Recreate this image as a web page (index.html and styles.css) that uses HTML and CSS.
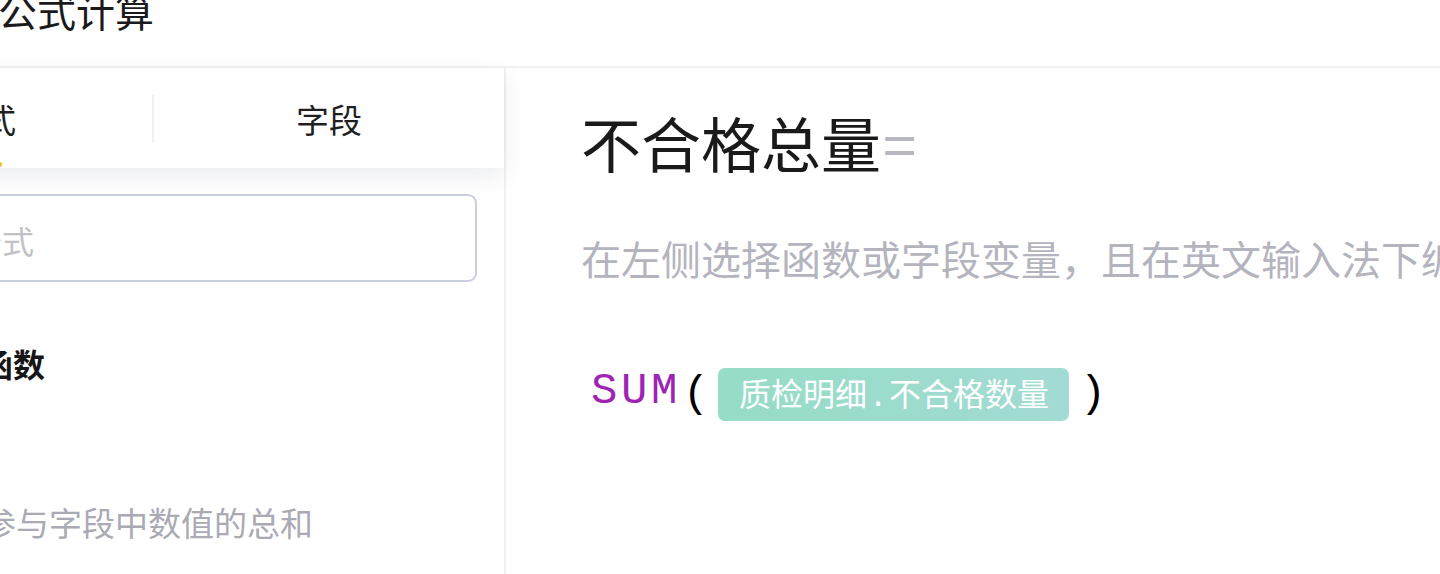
FILE: index.html
```html
<!DOCTYPE html>
<html lang="zh-CN">
<head>
<meta charset="utf-8">
<title>公式计算</title>
<link rel="stylesheet" href="styles.css">
</head>
<body>
<div class="app">
  <header class="header">
    <h1 class="header-title">公式计算</h1>
  </header>
  <div class="main">
    <aside class="left">
      <div class="tabs">
        <div class="tab tab-active">公式<span class="tab-bar"></span></div>
        <div class="tab-divider"></div>
        <div class="tab tab-fill">字段</div>
      </div>
      <div class="left-body">
        <div class="search">
          <svg class="search-icon" width="24" height="24" viewBox="0 0 24 24" fill="none" stroke="#c0c0c8" stroke-width="2"><circle cx="11" cy="11" r="7"/><path d="M16 16l5 5"/></svg>
          <span class="search-ph">公式</span>
        </div>
        <div class="group-title">数学函数</div>
        <div class="fn-item">
          <div class="fn-name">SUM</div>
          <div class="fn-desc">返回参与字段中数值的总和</div>
        </div>
      </div>
    </aside>
    <section class="right">
      <div class="formula-name">不合格总量<span class="eq">=</span></div>
      <div class="hint">在左侧选择函数或字段变量，且在英文输入法下编辑公式</div>
      <div class="formula">
        <span class="fn">SUM</span><span class="paren">(</span><span class="tag"><span class="tag-text">质检明细<span class="dot">.</span>不合格数量</span></span><span class="paren paren-close">)</span>
      </div>
    </section>
  </div>
</div>
</body>
</html>
```
FILE: styles.css
```css
html, body {
  margin: 0;
  padding: 0;
  background: #ffffff;
}
body {
  width: 1440px;
  height: 574px;
  overflow: hidden;
  font-family: "Noto Sans CJK SC", "Noto Sans", sans-serif;
  color: #1c1c1c;
}
.app {
  display: flex;
  flex-direction: column;
  height: 574px;
}
.header {
  height: 66px;
  border-bottom: 2px solid #f2f2f4;
  display: flex;
  align-items: flex-start;
  flex: 0 0 auto;
}
.header-title {
  margin: -9px 0 0 -2px;
  font-size: 39px;
  line-height: 39px;
  font-weight: 400;
  color: #1a1a1a;
}
.main {
  display: flex;
  flex: 1 1 auto;
  min-height: 0;
}
.left {
  flex: 0 0 690px;
  margin-left: -186px;
  border-right: 2px solid #f2f2f4;
  display: flex;
  flex-direction: column;
}
.tabs {
  height: 100px;
  display: flex;
  align-items: center;
  background: #fff;
  box-shadow: 0 8px 22px rgba(40, 50, 90, 0.09);
  position: relative;
  z-index: 1;
}
.tab {
  height: 100px;
  display: flex;
  align-items: center;
  justify-content: center;
  font-size: 33px;
  line-height: 33px;
  color: #1f1f1f;
  padding-top: 2px;
  box-sizing: border-box;
}
.tab-active {
  flex: 0 0 338px;
  position: relative;
}
.tab-bar {
  position: absolute;
  left: 150px;
  bottom: 1px;
  width: 38px;
  height: 5px;
  border-radius: 3px;
  background: #f5b91f;
}
.tab-divider {
  flex: 0 0 2px;
  height: 49px;
  background: #f1f1f3;
}
.tab-fill {
  flex: 1 1 auto;
}
.left-body {
  padding: 26px 27px 0 103px;
  display: flex;
  flex-direction: column;
}
.search {
  height: 88px;
  box-sizing: border-box;
  border: 2px solid #cacedc;
  border-radius: 9px;
  display: flex;
  align-items: center;
  gap: 14px;
  padding-left: 13px;
}
.search-ph {
  font-size: 32px;
  line-height: 32px;
  color: #c2c2c6;
  padding-top: 3px;
}
.group-title {
  margin-top: 65px;
  font-size: 32px;
  line-height: 32px;
  font-weight: 700;
  color: #161616;
}
.fn-item {
  display: flex;
  flex-direction: column;
}
.fn-name {
  margin-top: 36px;
  font-size: 32px;
  line-height: 32px;
  color: #1f1f1f;
}
.fn-desc {
  margin-top: 59px;
  font-size: 33px;
  line-height: 33px;
  color: #aaaab4;
  white-space: nowrap;
}
.right {
  flex: 1 1 auto;
  padding: 44px 0 0 75px;
  display: flex;
  flex-direction: column;
  overflow: hidden;
}
.formula-name {
  font-size: 60px;
  line-height: 60px;
  color: #1a1a1a;
  white-space: nowrap;
}
.eq {
  color: #b7b7c0;
  margin-left: 2px;
}
.hint {
  margin-top: 66px;
  font-size: 40px;
  line-height: 40px;
  color: #b4b4be;
  white-space: nowrap;
}
.formula {
  margin-top: 90px;
  padding-left: 10px;
  display: flex;
  align-items: center;
  height: 53px;
  white-space: nowrap;
}
.fn {
  font-family: "Liberation Mono", monospace;
  font-size: 44px;
  letter-spacing: 3.6px;
  color: #9d24b4;
  line-height: 53px;
  padding-bottom: 6px;
}
.paren {
  font-family: "Liberation Mono", monospace;
  font-size: 44px;
  color: #000;
  line-height: 53px;
  width: 30px;
  text-align: center;
}
.tag {
  height: 53px;
  box-sizing: border-box;
  display: flex;
  align-items: center;
  padding: 0 20px 0 21px;
  margin-left: 7px;
  border-radius: 7px;
  background: linear-gradient(90deg, #96dcc6, #a2dbd3);
}
.tag-text {
  color: #ffffff;
  font-size: 32px;
  line-height: 36px;
}
.dot {
  font-family: "Liberation Mono", monospace;
  display: inline-block;
  width: 22px;
  text-align: center;
}
.paren-close {
  margin-left: 9px;
}
```
